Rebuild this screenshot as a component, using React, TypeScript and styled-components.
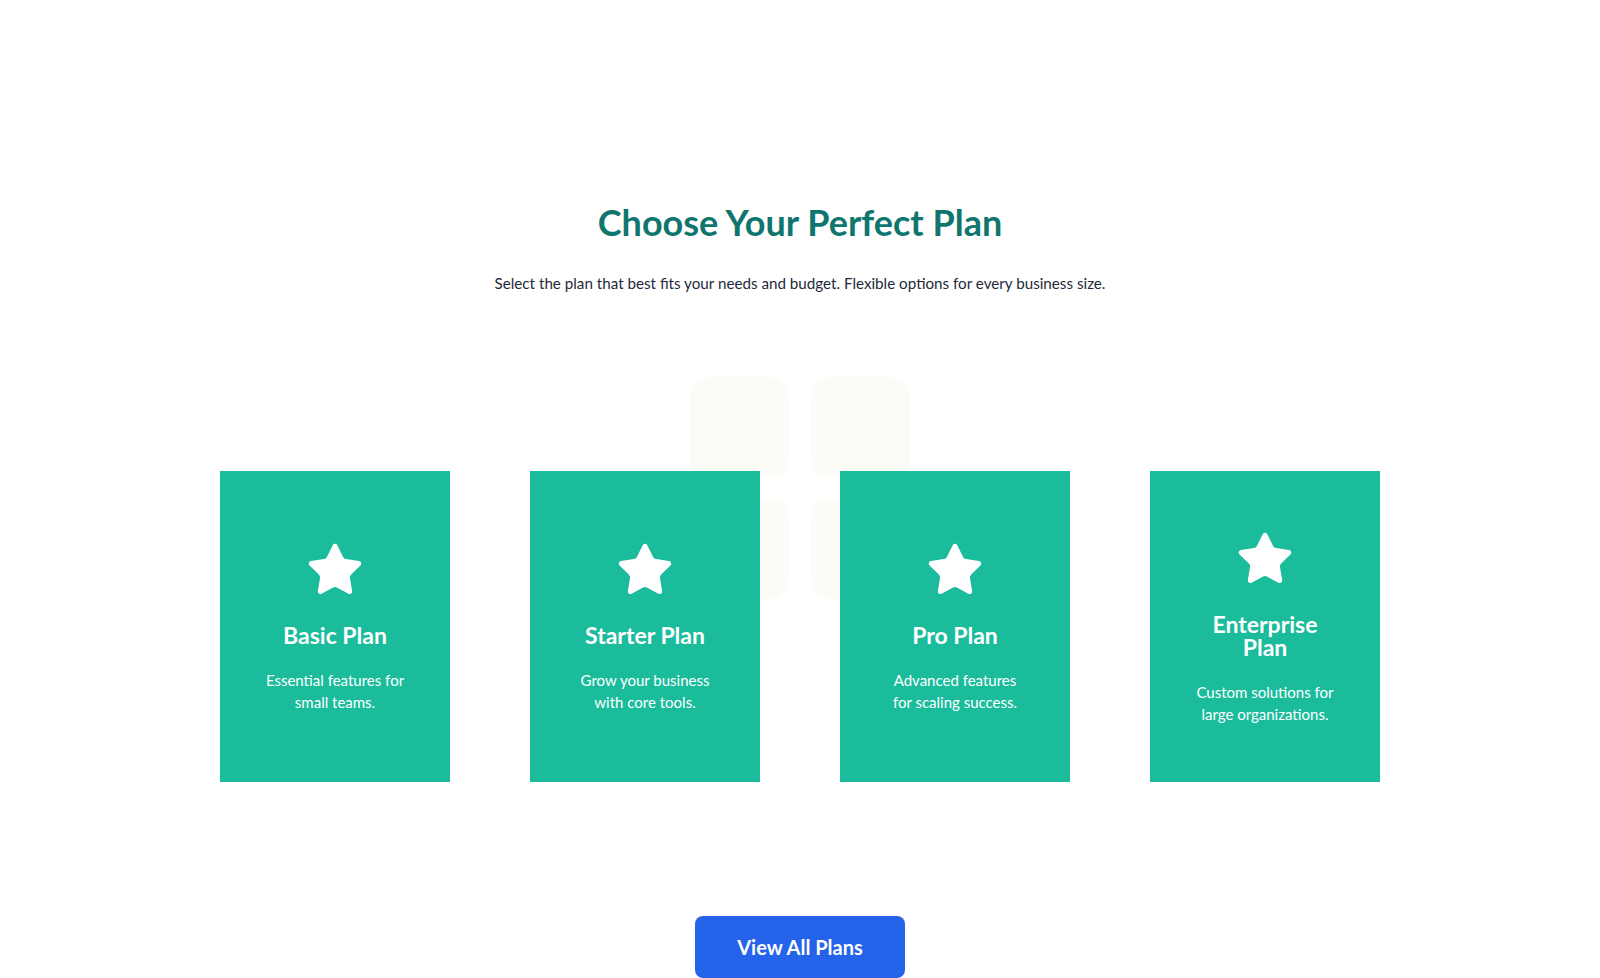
import { Star } from "lucide-react";
import styled, { createGlobalStyle } from "styled-components";

const GlobalStyle = createGlobalStyle`
  body {
    margin: 0;
    background: #ffffff;
    font-family: Lato, "Noto Sans", Arial, sans-serif;
  }
`;

const Section = styled.section`
  display: flex;
  flex-direction: column;
  align-items: center;
  padding-top: 201px;
  height: 978px;
  box-sizing: border-box;
  overflow: hidden;
`;

const Title = styled.h1`
  margin: 0;
  font-size: 36px;
  line-height: 43px;
  font-weight: 700;
  color: #0f766e;
`;

const Subtitle = styled.p`
  margin: 28px 0 0;
  font-size: 15.2px;
  line-height: 22px;
  color: #1e293b;
`;

const CardsArea = styled.div`
  position: relative;
  margin-top: 177px;
`;

const Decor = styled.div`
  position: absolute;
  top: -94px;
  left: 50%;
  transform: translateX(-50%);
  display: grid;
  grid-template-columns: repeat(2, 100px);
  gap: 22px;
  z-index: 0;
`;

const DecorTile = styled.div`
  width: 100px;
  height: 100px;
  border-radius: 20px;
  background: #fcfbf5;
`;

const CardRow = styled.div`
  position: relative;
  z-index: 1;
  display: grid;
  grid-template-columns: repeat(4, 230px);
  gap: 80px;
`;

const Card = styled.div`
  height: 311px;
  background: #1abc9c;
  display: flex;
  flex-direction: column;
  align-items: center;
  justify-content: center;
  text-align: center;
  color: #ffffff;
  padding: 0 20px;
  box-sizing: border-box;
`;

const PlanName = styled.h3`
  margin: 24px 0 0;
  font-size: 23px;
  line-height: 23px;
  font-weight: 700;
  max-width: 130px;
`;

const PlanText = styled.p`
  margin: 22px 0 0;
  font-size: 15px;
  line-height: 22px;
  max-width: 142px;
`;

const Button = styled.button`
  margin-top: 134px;
  width: 210px;
  height: 64px;
  border: none;
  border-radius: 8px;
  background: #2563eb;
  color: #ffffff;
  font-family: inherit;
  font-size: 20px;
  font-weight: 700;
  cursor: pointer;
`;

const plans = [
  { name: "Basic Plan", text: "Essential features for small teams." },
  { name: "Starter Plan", text: "Grow your business with core tools." },
  { name: "Pro Plan", text: "Advanced features for scaling success." },
  { name: "Enterprise Plan", text: "Custom solutions for large organizations." },
];

export default function App() {
  return (
    <>
      <GlobalStyle />
      <Section>
        <Title>Choose Your Perfect Plan</Title>
        <Subtitle>
          Select the plan that best fits your needs and budget. Flexible options
          for every business size.
        </Subtitle>
        <CardsArea>
          <Decor>
            <DecorTile />
            <DecorTile />
            <DecorTile />
            <DecorTile />
          </Decor>
          <CardRow>
            {plans.map((plan) => (
              <Card key={plan.name}>
                <Star size={60} fill="#ffffff" color="#ffffff" strokeWidth={1} />
                <PlanName>{plan.name}</PlanName>
                <PlanText>{plan.text}</PlanText>
              </Card>
            ))}
          </CardRow>
        </CardsArea>
        <Button>View All Plans</Button>
      </Section>
    </>
  );
}
